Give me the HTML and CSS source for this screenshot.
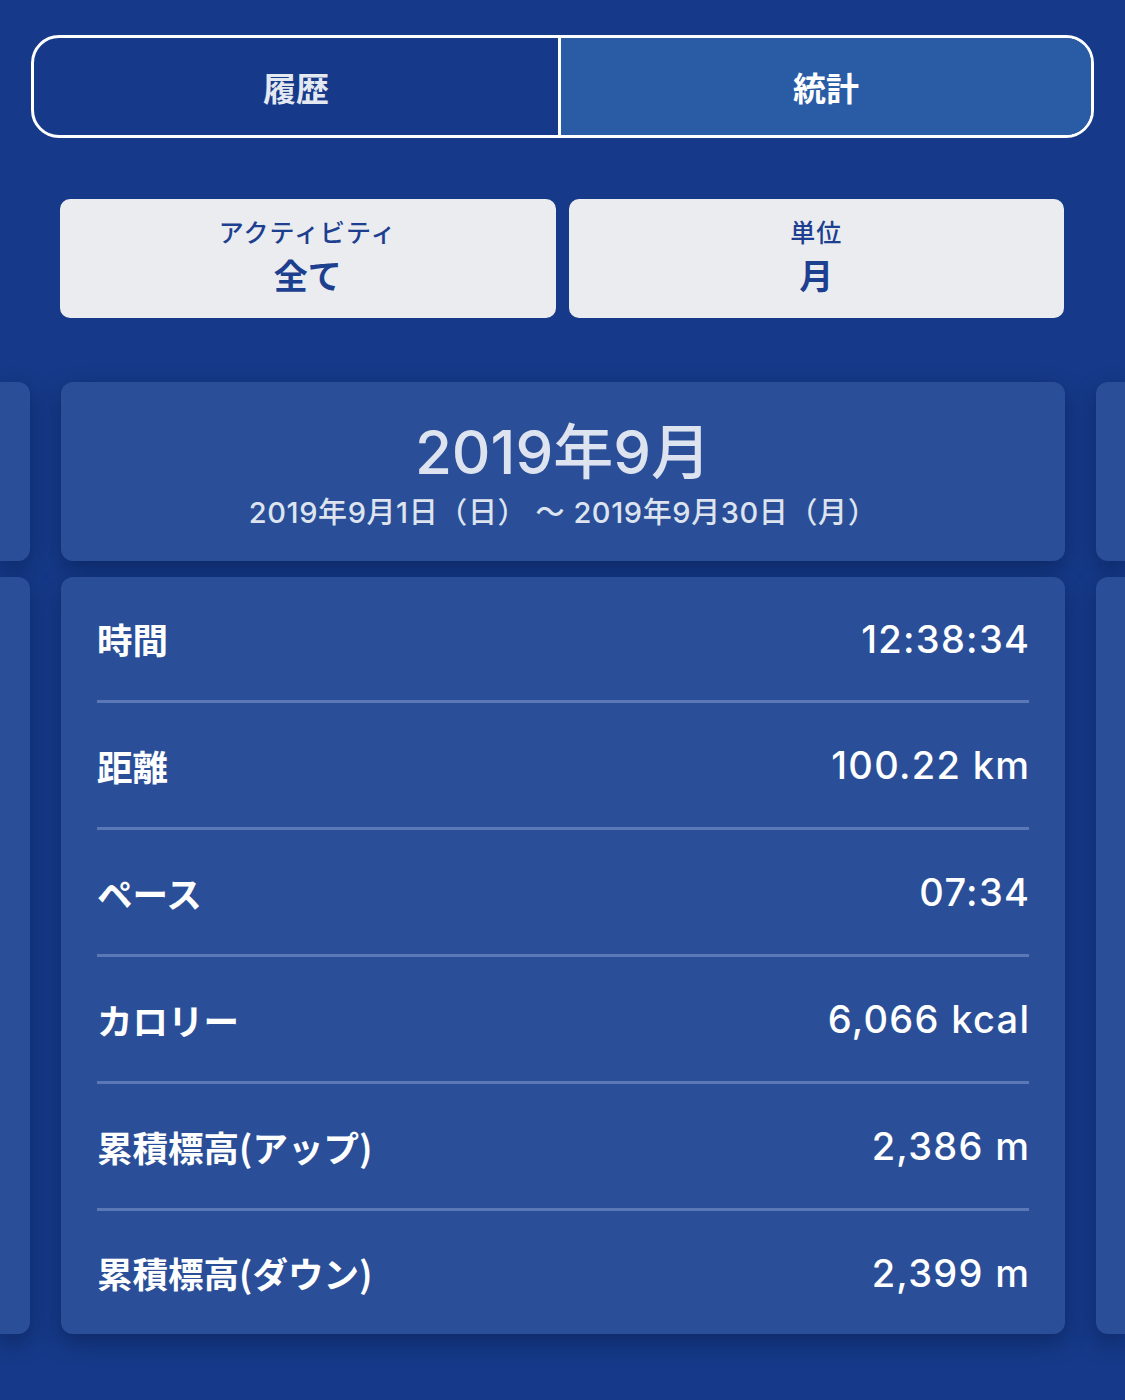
FILE: index.html
```html
<!DOCTYPE html>
<html lang="ja">
<head>
  <meta charset="UTF-8" />
  <meta name="viewport" content="width=device-width, initial-scale=1.0"/>
  <title>統計</title>
  <link rel="stylesheet" href="styles.css">
</head>
<body>

  <!-- Tabs -->
  <div class="segment">
    <div class="segment-item">履歴</div>
    <div class="segment-item active">統計</div>
  </div>

  <!-- Filters -->
  <div class="filters">
    <div class="filter-card">
      <div class="filter-label">アクティビティ</div>
      <div class="filter-value">全て</div>
    </div>
    <div class="filter-card">
      <div class="filter-label">単位</div>
      <div class="filter-value">月</div>
    </div>
  </div>

  <!-- Month pager -->
  <div class="pager">
    <div class="peek peek-left"></div>
    <div class="card period-card">
      <div class="period-title">2019年9月</div>
      <div class="period-range">2019年9月1日（日） ～ 2019年9月30日（月）</div>
    </div>
    <div class="peek peek-right"></div>

    <div class="peek peek-left"></div>
    <div class="card stats-card">
      <div class="stat-row">
        <span class="stat-label">時間</span>
        <span class="stat-value">12:38:34</span>
      </div>
      <div class="stat-row">
        <span class="stat-label">距離</span>
        <span class="stat-value">100.22 km</span>
      </div>
      <div class="stat-row">
        <span class="stat-label">ペース</span>
        <span class="stat-value">07:34</span>
      </div>
      <div class="stat-row">
        <span class="stat-label">カロリー</span>
        <span class="stat-value">6,066 kcal</span>
      </div>
      <div class="stat-row">
        <span class="stat-label">累積標高(アップ)</span>
        <span class="stat-value">2,386 m</span>
      </div>
      <div class="stat-row">
        <span class="stat-label">累積標高(ダウン)</span>
        <span class="stat-value">2,399 m</span>
      </div>
    </div>
    <div class="peek peek-right"></div>
  </div>

</body>
</html>
```

FILE: styles.css
```css
body {
  margin: 0;
  background-color: #163a89;
  font-family: Inter, "Noto Sans CJK JP", sans-serif;
  color: #ffffff;
  height: 1400px;
  overflow: hidden;
}
.segment {
  display: flex;
  margin: 35px 31px 0 31px;
  height: 97px;
  border: 3px solid #ffffff;
  border-radius: 28px;
  overflow: hidden;
}
.segment-item {
  flex: 1;
  display: flex;
  align-items: center;
  justify-content: center;
  font-family: "Noto Sans CJK JP", sans-serif;
  font-size: 33px;
  font-weight: 700;
  color: #e3e8f1;
}
.segment-item:first-child {
  flex: 0 0 524px;
}
.segment-item.active {
  background-color: #2a5ca6;
  border-left: 3px solid #ffffff;
  color: #ffffff;
}
.filters {
  display: flex;
  gap: 13px;
  margin: 61px 61px 0 60px;
}
.filter-card {
  flex: 1;
  height: 119px;
  background-color: #ebecf0;
  border-radius: 10px;
  display: flex;
  flex-direction: column;
  align-items: center;
  justify-content: center;
  font-family: "Noto Sans CJK JP", sans-serif;
  color: #1d3f8f;
}
.filter-label {
  font-size: 25px;
  font-weight: 500;
  line-height: 30px;
  letter-spacing: 1px;
  margin-top: -6px;
}
.filter-value {
  font-size: 34px;
  font-weight: 700;
  line-height: 42px;
  margin-top: 8px;
}
.pager {
  display: grid;
  grid-template-columns: 30px 1004px 29px;
  justify-content: space-between;
  row-gap: 16px;
  margin-top: 64px;
}
.card,
.peek {
  background-color: #2a4f98;
  box-shadow: 0 8px 22px rgba(5, 20, 60, 0.45);
}
.card {
  border-radius: 12px;
}
.peek-left {
  border-radius: 0 12px 12px 0;
}
.peek-right {
  border-radius: 12px 0 0 12px;
}
.period-card {
  height: 179px;
  display: flex;
  flex-direction: column;
  align-items: center;
  justify-content: center;
  color: #dde4ef;
}
.period-title {
  font-size: 60px;
  font-weight: 500;
  line-height: 66px;
  margin-top: 6px;
}
.period-range {
  font-size: 29px;
  font-weight: 500;
  line-height: 36px;
  letter-spacing: 0.6px;
  margin-top: 10px;
}
.stats-card {
  padding: 0 36px;
}
.stat-row {
  display: flex;
  justify-content: space-between;
  align-items: center;
  height: 124px;
  border-bottom: 3px solid #5a78b5;
}
.stat-row:first-child {
  height: 123px;
}
.stat-row:last-child {
  border-bottom: none;
  height: 123px;
}
.stat-label {
  font-family: "Noto Sans CJK JP", sans-serif;
  font-size: 35.5px;
  font-weight: 700;
}
.stat-value {
  font-size: 38px;
  font-weight: 500;
  letter-spacing: 1.3px;
  margin-right: -1.3px;
}
```
